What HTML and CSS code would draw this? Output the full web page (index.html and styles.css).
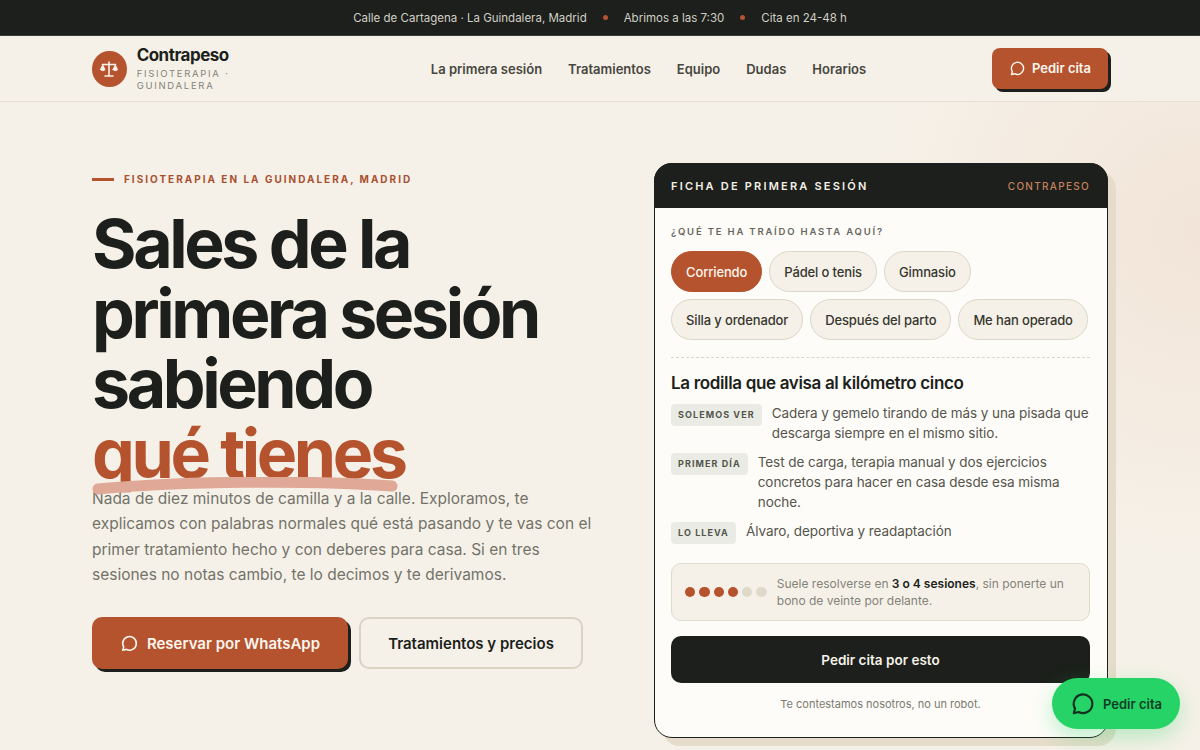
FILE: index.html
```html
<!DOCTYPE html>
<html lang="es">
<head>
<meta charset="utf-8">
<title>Contrapeso</title>
<link rel="stylesheet" href="styles.css">
</head>
<body>
<div class="topbar">
  <span>Calle de Cartagena · La Guindalera, Madrid</span><i class="tdot"></i>
  <span>Abrimos a las 7:30</span><i class="tdot"></i>
  <span>Cita en 24-48 h</span>
</div>
<header class="nav">
  <a class="brand">
    <span class="logo"><svg viewBox="0 0 24 24" width="24" height="24" fill="none" stroke="#f7f2e9" stroke-width="1.6" stroke-linecap="round"><path d="M12 5v13M8 19h8M5.5 7.5h13"/><path d="M3.5 12.5l2.2-4.6 2.2 4.6c0 1.6-4.4 1.6-4.4 0zM16.100 12.500l2.200-4.600 2.200 4.600c0 1.600-4.400 1.600-4.400 0z" fill="#f7f2e9" stroke-width="1"/></svg></span>
    <span class="brandtext"><b>Contrapeso</b><small>FISIOTERAPIA · GUINDALERA</small></span>
  </a>
  <nav class="links"><a>La primera sesión</a><a>Tratamientos</a><a>Equipo</a><a>Dudas</a><a>Horarios</a></nav>
  <a class="btn btn-nav"><svg class="bubble" viewBox="0 0 24 24" width="17" height="17"><path d="M3.500 20.500l1.200-4.200A8.600 8.600 0 1 1 8 19.400z"/></svg>Pedir cita</a>
</header>
<main class="hero">
  <section class="left">
    <p class="eyebrow"><i></i>FISIOTERAPIA EN LA GUINDALERA, MADRID</p>
    <h1>Sales de la primera sesión sabiendo <em>qué tienes<svg viewBox="0 0 306 18" width="306" height="18" preserveAspectRatio="none"><path d="M6 12C90 4 220 3 300 9" fill="none" stroke="#e0a997" stroke-width="11" stroke-linecap="round"/></svg></em></h1>
    <p class="lead">Nada de diez minutos de camilla y a la calle. Exploramos, te explicamos con palabras normales qué está pasando y te vas con el primer tratamiento hecho y con deberes para casa. Si en tres sesiones no notas cambio, te lo decimos y te derivamos.</p>
    <div class="cta">
      <a class="btn btn-main"><svg class="bubble" viewBox="0 0 24 24" width="19" height="19"><path d="M3.500 20.500l1.200-4.200A8.600 8.600 0 1 1 8 19.400z"/></svg>Reservar por WhatsApp</a>
      <a class="btn btn-ghost">Tratamientos y precios</a>
    </div>
  </section>
  <aside class="card">
    <div class="cardhead"><strong>FICHA DE PRIMERA SESIÓN</strong><span>CONTRAPESO</span></div>
    <div class="cardbody">
      <p class="q">¿QUÉ TE HA TRAÍDO HASTA AQUÍ?</p>
      <div class="chips">
        <span class="chip on">Corriendo</span><span class="chip">Pádel o tenis</span><span class="chip">Gimnasio</span>
        <span class="chip">Silla y ordenador</span><span class="chip">Después del parto</span><span class="chip">Me han operado</span>
      </div>
      <h2>La rodilla que avisa al kilómetro cinco</h2>
      <div class="row"><span class="tag">SOLEMOS VER</span><p>Cadera y gemelo tirando de más y una pisada que descarga siempre en el mismo sitio.</p></div>
      <div class="row"><span class="tag">PRIMER DÍA</span><p>Test de carga, terapia manual y dos ejercicios concretos para hacer en casa desde esa misma noche.</p></div>
      <div class="row"><span class="tag">LO LLEVA</span><p>Álvaro, deportiva y readaptación</p></div>
      <div class="sessions">
        <div class="dots"><i class="f"></i><i class="f"></i><i class="f"></i><i class="f"></i><i></i><i></i></div>
        <p>Suele resolverse en <b>3 o 4 sesiones</b>, sin ponerte un bono de veinte por delante.</p>
      </div>
      <a class="btn btn-dark">Pedir cita por esto</a>
      <p class="note">Te contestamos nosotros, no un robot.</p>
    </div>
  </aside>
</main>
<a class="fab"><svg viewBox="0 0 24 24" width="26" height="26"><path d="M3.500 20.500l1.200-4.200A8.600 8.600 0 1 1 8 19.400z"/></svg>Pedir cita</a>
</body>
</html>
```
FILE: styles.css
```css
*{box-sizing:border-box}
html,body{margin:0;height:750px;overflow:hidden}
body{font-family:Inter,"Liberation Sans",sans-serif;background:#f6f1e8;color:#1c1f1b;position:relative}
p,h1,h2{margin:0}
i,em{font-style:normal}
a{color:inherit;text-decoration:none}
.topbar{height:36px;background:#1c1f1b;border-bottom:1px solid #3a3c36;color:#d2cfc6;font-size:11.500px;display:flex;align-items:center;justify-content:center;gap:16px}
.tdot{width:5px;height:5px;border-radius:50%;background:#b5532e}
.nav{height:66px;padding:0 92px;display:flex;align-items:center;justify-content:space-between;border-bottom:1px solid #e7e1d5}
.brand{display:flex;align-items:center;gap:10px;width:213px}
.logo{width:36px;height:36px;border-radius:50%;background:#b5532e;display:flex;align-items:center;justify-content:center}
.brandtext{display:flex;flex-direction:column;gap:3px}
.brandtext b{font-size:17px;line-height:20px;font-weight:700;letter-spacing:-.03em}
.brandtext small{font-size:9.500px;line-height:12px;letter-spacing:.18em;color:#84837a}
.links{display:flex;gap:26px;font-size:13px;font-weight:600;color:#46473f}
.btn{display:flex;align-items:center;justify-content:center;font-weight:600}
.bubble{fill:none;stroke:currentColor;stroke-width:2;stroke-linejoin:round}
.btn-nav{width:116px;height:41px;margin-top:-1px;gap:6px;background:#b5532e;color:#fbf6ee;border-radius:8px;box-shadow:3px 3px 0 #1c1f1b;font-size:13px}
.hero{height:648px;padding:61px 92px 0;display:flex;justify-content:space-between;align-items:flex-start;background:radial-gradient(circle at 100% 20%,#f2e4d8 0,#f6f1e8 320px)}
.left{width:500px}
.eyebrow{display:flex;align-items:center;gap:10px;font-size:10px;line-height:12px;font-weight:700;letter-spacing:.2em;color:#a9502f;margin-top:10px}
.eyebrow i{width:22px;height:3px;background:#b5532e}
h1{font-size:68px;line-height:70px;font-weight:700;letter-spacing:-.05em;margin-top:23px}
h1 em{display:block;color:#b5532e;position:relative}
h1 em svg{position:absolute;left:0;top:59px;display:block}
.lead{font-size:15.500px;line-height:25.300px;color:#73736a;margin-top:-2px;width:500px}
.cta{display:flex;gap:11px;margin-top:30px}
.btn-main{width:256px;height:52px;gap:8px;background:#b5532e;color:#fbf6ee;border-radius:10px;box-shadow:3px 3px 0 #1c1f1b;font-size:15px}
.btn-ghost{width:224px;height:52px;border:2px solid #d9d3c5;border-radius:10px;font-size:15px}
.card{width:454px;height:575px;border:1px solid #1c1f1b;border-radius:18px;background:#fefcf8;box-shadow:8px 8px 0 #e6dccb;overflow:visible}
.cardhead{height:45px;margin:-1px -1px 0;padding:0 18px 0 17px;background:#1c1f1b;border-radius:18px 18px 0 0;display:flex;align-items:center;justify-content:space-between}
.cardhead strong{color:#f4efe6;font-size:11px;font-weight:600;letter-spacing:.2em}
.cardhead span{color:#c5825f;font-size:10px;font-weight:500;letter-spacing:.13em}
.cardbody{padding:18px 17px 0 16px}
.q{font-size:9.500px;line-height:12px;font-weight:600;letter-spacing:.19em;color:#66665d}
.chips{display:flex;flex-wrap:wrap;gap:7px;margin-top:13px;padding-bottom:17px;border-bottom:1px dashed #dcd6c9}
.chip{height:41px;padding:0 14px;border:1px solid #dcd6c9;border-radius:21px;background:#f6f1e8;display:flex;align-items:center;font-size:13px;font-weight:500;color:#36372f;letter-spacing:-.01em}
.chip.on{background:#b5532e;border-color:#b5532e;color:#fbf6ee}
h2{font-size:17px;line-height:22px;font-weight:600;letter-spacing:-.02em;margin-top:14px}
.row{display:flex;gap:10px;align-items:flex-start;margin-top:9px;font-size:13.500px;line-height:20px;color:#54554c}
.row p{letter-spacing:-.005em}
.tag{flex:none;height:22px;margin-top:1px;padding:0 7px;border-radius:4px;background:#eaebe4;display:flex;align-items:center;font-size:9px;font-weight:700;letter-spacing:.12em;color:#53554c}
.sessions{height:58px;margin-top:19px;padding:0 13px;display:flex;align-items:center;gap:10px;background:#f6f1e8;border:1px solid #e0dacd;border-radius:10px}
.sessions p{font-size:12px;line-height:17px;color:#84837a}
.sessions b{color:#1c1f1b;font-weight:600}
.dots{display:flex;gap:4px;flex:none}
.dots i{width:10.300px;height:10.300px;border-radius:50%;background:#dfd9ca}
.dots i.f{background:#b5532e}
.btn-dark{height:47px;margin-top:15px;background:#1c1f1b;color:#f6f1e8;border-radius:10px;font-size:13.500px}
.note{margin-top:14px;text-align:center;font-size:11px;line-height:14px;color:#7a7a70}
.fab{position:absolute;right:20px;top:678px;width:128px;height:51px;border-radius:26px;background:#25d366;color:#0f3d24;display:flex;align-items:center;justify-content:center;gap:7px;font-size:13px;font-weight:600;box-shadow:0 8px 22px rgba(37,211,102,.3)}
.fab svg{fill:none;stroke:#12301f;stroke-width:2;stroke-linejoin:round}
```
